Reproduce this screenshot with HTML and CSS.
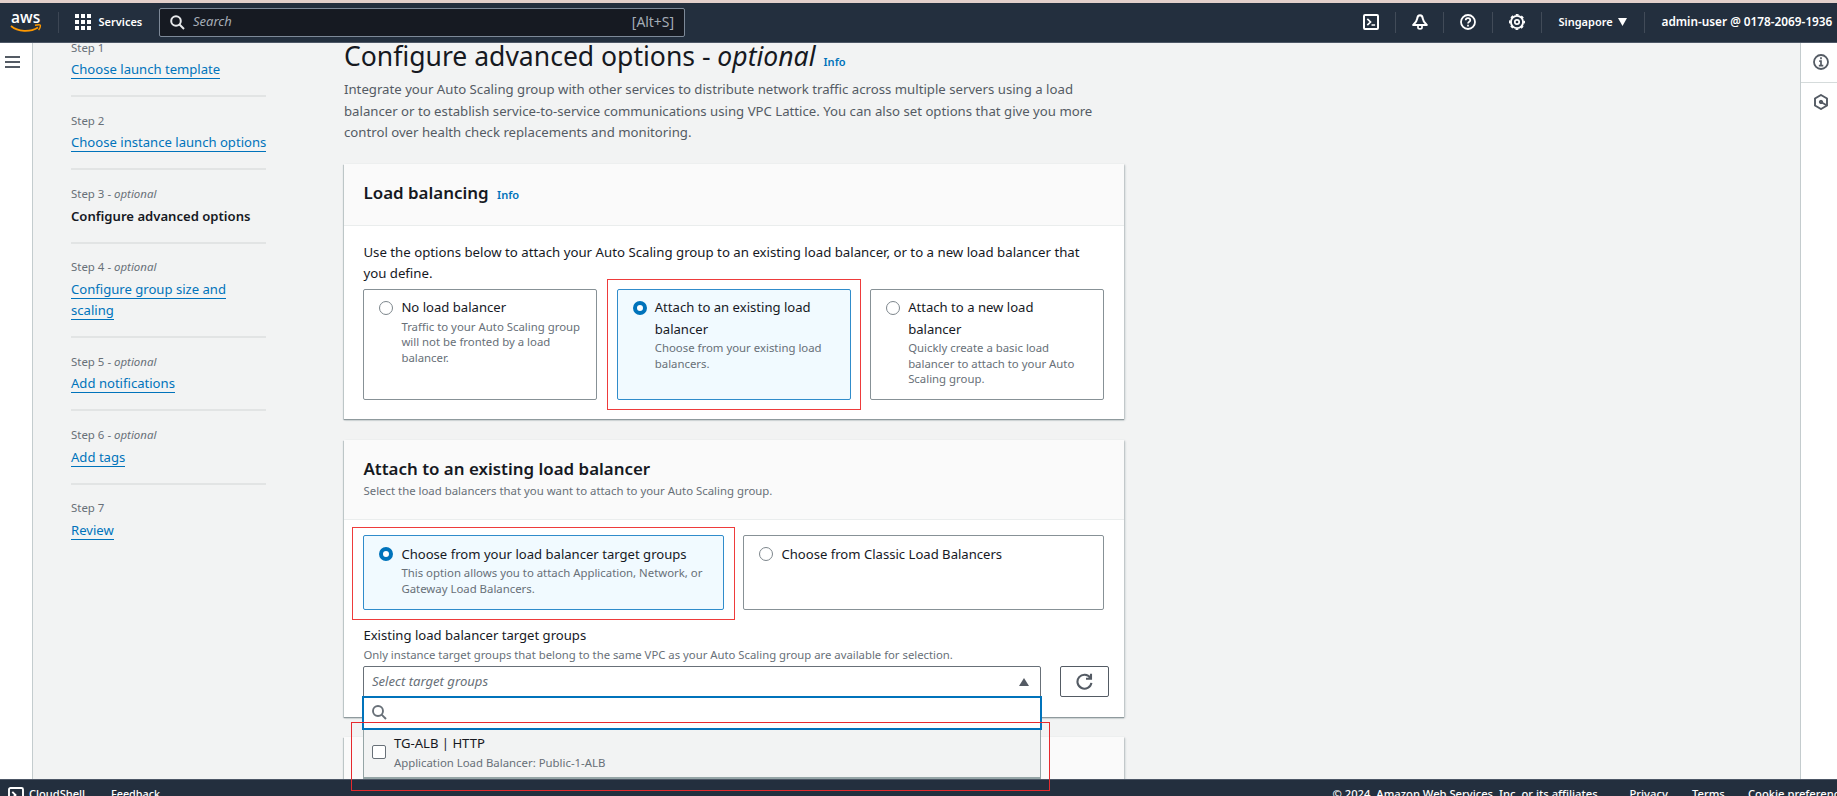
FILE: index.html
```html
<!DOCTYPE html>
<html lang="en">
<head>
<meta charset="utf-8">
<title>Configure advanced options</title>
<link rel="stylesheet" href="styles.css">
</head>
<body>
<div class="app">
  <header class="topbar">
    <div class="brand">
      <span class="brand-name">aws</span>
      <svg class="brand-smile" width="32" height="9" viewBox="0 0 32 9" fill="none" stroke="#ff9900" stroke-width="1.8"><path d="M1 2C8 8 20 8.5 28 3.5"/><path d="M25 1.2C28 .6 30 .8 30.3 1.2C30.6 2.5 29.8 4.6 28.6 6.2" stroke-width="1.4"/></svg>
    </div>
    <div class="services">
      <svg width="16" height="16" viewBox="0 0 16 16" fill="#fff"><path d="M0 0h4v4H0zM6 0h4v4H6zM12 0h4v4h-4zM0 6h4v4H0zM6 6h4v4H6zM12 6h4v4h-4zM0 12h4v4H0zM6 12h4v4H6zM12 12h4v4h-4z"/></svg>
      <span>Services</span>
    </div>
    <div class="search">
      <svg width="15" height="15" viewBox="0 0 15 15" fill="none" stroke="#e8eaec" stroke-width="2"><circle cx="6" cy="6" r="4.8"/><path d="M9.5 9.5L14 14"/></svg>
      <span class="search-hint">Search</span>
      <span class="search-key">[Alt+S]</span>
    </div>
    <nav class="tools">
      <span class="tool"><svg width="16" height="16" viewBox="0 0 16 16" fill="none" stroke="#fff" stroke-width="2"><rect x="1" y="1" width="14" height="14" rx="1"/><path d="M4.3 4.8L7.5 8L4.3 11.2M8.5 11h3.6" stroke-width="1.7"/></svg></span>
      <span class="tool"><svg width="16" height="16" viewBox="0 0 16 16" fill="none" stroke="#fff" stroke-width="2" stroke-linejoin="round"><path d="M8 1.200C6.300 1.200 5.400 2.600 5.200 4.600C4.900 7.300 3.400 9 1.200 11H14.800C12.600 9 11.100 7.300 10.800 4.600C10.600 2.600 9.700 1.200 8 1.200Z"/><path d="M6 11.500v2.200c0 1.500 4 1.500 4 0V11.500" stroke-width="1.700"/></svg></span>
      <span class="tool"><svg width="16" height="16" viewBox="0 0 16 16" fill="none" stroke="#fff" stroke-width="1.8"><circle cx="8" cy="8" r="7"/><path d="M5.700 6.300C5.700 3.400 10.300 3.500 10.300 6.200C10.300 7.800 8 7.700 8 9.600M8 10.800v1.700" stroke-width="1.7"/></svg></span>
      <span class="tool"><svg width="16" height="16" viewBox="0 0 16 16" fill="none" stroke="#fff"><circle cx="8" cy="8" r="6.100" stroke-width="1.900"/><circle cx="8" cy="8" r="7.300" stroke-width="1.400" stroke-dasharray="2.900 2.833" stroke-dashoffset="1.450"/><circle cx="8" cy="8" r="2.200" stroke-width="1.700"/></svg></span>
      <span class="region">Singapore <svg width="9" height="8" viewBox="0 0 9 8" fill="#fff"><path d="M0 0h9L4.500 8z"/></svg></span>
      <span class="account">admin-user @ 0178-2069-1936</span>
    </nav>
  </header>

  <div class="workspace">
    <aside class="rail rail-left">
      <svg width="15" height="12" viewBox="0 0 15 12" stroke="#545b64" stroke-width="1.800"><path d="M0 1h15M0 6h15M0 11h15"/></svg>
    </aside>

    <div class="page">
      <nav class="steps">
        <div class="step"><p class="step-no">Step 1</p><a>Choose launch template</a></div>
        <div class="step"><p class="step-no">Step 2</p><a>Choose instance launch options</a></div>
        <div class="step"><p class="step-no">Step 3 - <i>optional</i></p><b>Configure advanced options</b></div>
        <div class="step"><p class="step-no">Step 4 - <i>optional</i></p><a>Configure group size and<br>scaling</a></div>
        <div class="step"><p class="step-no">Step 5 - <i>optional</i></p><a>Add notifications</a></div>
        <div class="step"><p class="step-no">Step 6 - <i>optional</i></p><a>Add tags</a></div>
        <div class="step"><p class="step-no">Step 7</p><a>Review</a></div>
      </nav>

      <main class="content">
        <h1>Configure advanced options - <i>optional</i><span class="info">Info</span></h1>
        <p class="intro">Integrate your Auto Scaling group with other services to distribute network traffic across multiple servers using a load<br>balancer or to establish service-to-service communications using VPC Lattice. You can also set options that give you more<br>control over health check replacements and monitoring.</p>

        <section class="panel panel-lb">
          <div class="panel-head"><h2>Load balancing<span class="info">Info</span></h2></div>
          <div class="panel-body">
            <p class="text">Use the options below to attach your Auto Scaling group to an existing load balancer, or to a new load balancer that<br>you define.</p>
            <div class="tiles tiles-three">
              <div class="tile"><span class="radio"></span><div><p class="label">No load balancer</p><p class="hint">Traffic to your Auto Scaling group<br>will not be fronted by a load<br>balancer.</p></div></div>
              <div class="tile selected"><span class="radio"></span><div><p class="label">Attach to an existing load<br>balancer</p><p class="hint">Choose from your existing load<br>balancers.</p></div><span class="mark mark-attach"></span></div>
              <div class="tile"><span class="radio"></span><div><p class="label">Attach to a new load<br>balancer</p><p class="hint">Quickly create a basic load<br>balancer to attach to your Auto<br>Scaling group.</p></div></div>
            </div>
          </div>
        </section>

        <section class="panel panel-existing">
          <div class="panel-head"><h2>Attach to an existing load balancer</h2><p class="hint">Select the load balancers that you want to attach to your Auto Scaling group.</p></div>
          <div class="panel-body">
            <div class="tiles tiles-two">
              <div class="tile selected"><span class="radio"></span><div><p class="label">Choose from your load balancer target groups</p><p class="hint">This option allows you to attach Application, Network, or<br>Gateway Load Balancers.</p></div><span class="mark mark-choose"></span></div>
              <div class="tile"><span class="radio"></span><div><p class="label">Choose from Classic Load Balancers</p></div></div>
            </div>
            <div class="field">
              <p class="label">Existing load balancer target groups</p>
              <p class="hint">Only instance target groups that belong to the same VPC as your Auto Scaling group are available for selection.</p>
              <div class="picker">
                <div class="select">
                  <span>Select target groups</span>
                  <svg width="10" height="8" viewBox="0 0 10 8" fill="#545b64"><path d="M0 8h10L5 0z"/></svg>
                  <div class="dropdown">
                    <div class="filter"><svg width="15" height="15" viewBox="0 0 15 15" fill="none" stroke="#687078" stroke-width="1.900"><circle cx="6" cy="6" r="5"/><path d="M9.600 9.600L14 14"/></svg></div>
                    <div class="option"><span class="checkbox"></span><div><p class="label">TG-ALB | HTTP</p><p class="hint">Application Load Balancer: Public-1-ALB</p></div></div>
                    <span class="mark mark-option"></span>
                  </div>
                </div>
                <button class="refresh"><svg width="17" height="17" viewBox="0 0 17 17" fill="none" stroke="#545b64" stroke-width="2.100"><path d="M14.300 4.800A7 7 0 1 0 15.400 9.800"/><path d="M15 .800v5H10"/></svg></button>
              </div>
            </div>
          </div>
        </section>

        <section class="panel panel-next"></section>
      </main>
    </div>

    <aside class="rail rail-right">
      <div class="rail-item"><svg width="16" height="16" viewBox="0 0 16 16" fill="none" stroke="#545b64" stroke-width="1.800"><circle cx="8" cy="8" r="7"/><path d="M8 3.300v1.900M6.200 7.200H8v4.500M5.800 11.700h4.500" stroke-width="1.700"/></svg></div>
      <div class="rail-item"><svg width="16" height="16" viewBox="0 0 16 16" fill="none" stroke="#545b64" stroke-width="1.900"><path d="M8 1l6 3.500v7L8 15l-6-3.500v-7z"/><circle cx="8" cy="8" r="1.700" fill="#545b64" stroke-width="1"/><path d="M8 8l5.500 3.200"/></svg></div>
    </aside>
  </div>

  <footer class="footer">
    <span class="shell"><svg width="16" height="16" viewBox="0 0 16 16" fill="none" stroke="#fff" stroke-width="1.900"><rect x="1" y="1" width="14" height="14" rx="1.500"/><path d="M4.300 4.800L7.500 8L4.300 11.200M8.500 11h3.600"/></svg>CloudShell</span>
    <span class="feedback">Feedback</span>
    <span class="copyright">© 2024, Amazon Web Services, Inc. or its affiliates.</span>
    <span class="privacy">Privacy</span>
    <span class="terms">Terms</span>
    <span>Cookie preferences</span>
  </footer>
</div>
</body>
</html>
```
FILE: styles.css
```css
* { box-sizing: border-box; }
body { margin: 0; overflow: hidden; font: 13.2px/21.4px "Noto Sans", "Open Sans", sans-serif; color: #16191f; }
p, h1, h2 { margin: 0; font-weight: 400; white-space: nowrap; }
svg { display: block; flex: none; }
.app { display: flex; flex-direction: column; width: 1837px; height: 796px; overflow: hidden; }

/* Top bar */
.topbar { display: flex; align-items: center; flex: none; height: 43px; padding-bottom: 1px; border-top: 3px solid #e3d0cb; border-bottom: 1px solid #4d5766; background: #232f3e; color: #fff; white-space: nowrap; }
.brand { width: 59px; height: 21px; padding-left: 10px; border-right: 1px solid #3c4654; }
.brand-name { display: block; height: 13px; margin-top: -1px; padding-left: 1px; font: 600 15.5px/13px "Open Sans", sans-serif; letter-spacing: .1px; }
.services { display: flex; align-items: center; gap: 7.5px; width: 100px; padding-left: 16px; font-weight: 600; font-size: 11px; }
.search { display: flex; align-items: center; width: 526px; height: 29px; padding: 0 10px; border: 1px solid #7d8998; border-radius: 2px; background: #161a22; }
.search-hint { flex: 1; padding-left: 8px; color: #a5adb6; font-style: italic; font-size: 13px; }
.search-key { color: #a5adb6; font-size: 13.9px; }
.tools { display: flex; align-items: center; margin-left: auto; }
.tool { display: flex; align-items: center; justify-content: center; width: 48.8px; height: 21px; border-right: 1px solid #414b58; }
.region { display: flex; align-items: center; gap: 5px; width: 102.5px; height: 21px; padding-left: 16.5px; border-right: 1px solid #414b58; font-weight: 600; font-size: 11px; }
.account { width: 192.5px; padding-left: 17px; font-weight: 600; font-size: 11.8px; }

/* Workspace */
.workspace { display: flex; flex: none; height: 736px; background: #f2f3f3; }
.rail { flex: none; background: #fff; }
.rail-left { width: 33px; padding: 13px 0 0 5px; border-right: 1px solid #c4ccce; }
.rail-right { width: 37px; border-left: 1px solid #c4ccce; }
.rail-item { display: flex; justify-content: center; height: 40px; padding: 11px 0 0 3px; border-bottom: 1px solid #d5dbdb; }
.rail-item + .rail-item { border: 0; }
.page { display: flex; flex: 1; min-width: 0; padding-left: 38px; }

/* Wizard steps */
.steps { flex: none; width: 195px; margin-right: 78px; }
.step { margin-bottom: 13.5px; padding-bottom: 14.7px; border-bottom: 2px solid #e2e4e4; font-size: 13.1px; white-space: nowrap; }
.step:first-child { margin-top: -5.4px; }
.step:last-child { border: 0; }
.step-no { height: 21.6px; color: #687078; font-size: 11.45px; line-height: 20px; }
.step a { color: #0073bb; border-bottom: 1px solid #0073bb; }
.step b { font-weight: 600; }

/* Main column */
.content { flex: none; width: 780px; }
h1 { height: 28px; font-size: 26.54px; line-height: 26px; }
.info { margin-left: 8px; color: #0073bb; font-size: 11.05px; font-weight: 600; }
h2 .info { margin-left: 8.5px; }
.intro { margin: 8.3px 0 20.5px; color: #545b64; font-size: 13.2px; }
.panel { background: #fff; box-shadow: 0 1px 1px #8f9a9d, 1px 1px 2px #bcc4c6, -1px 1px 1px #c9d0d2; }
.panel-head { padding: 16.7px 19.5px 0; border-bottom: 1px solid #eaeded; background: #fafafa; }
.panel-head h2 { font-size: 16.92px; line-height: 23px; font-weight: 600; }
.panel-head .hint { padding-top: 3.5px; }
.panel-lb { height: 255px; margin-bottom: 21px; }
.panel-lb .panel-head { height: 62px; }
.panel-existing { height: 277px; margin-bottom: 20px; }
.panel-existing .panel-head { height: 80px; }
.panel-next { height: 80px; background: #fafafa; }
.panel-body { padding: 0 20px 0 19.4px; }
.text { height: 62.6px; padding-top: 16px; font-size: 13.24px; }
.tiles { display: grid; gap: 19.5px; }
.tiles-three { grid-template-columns: repeat(3, 1fr); height: 111px; }
.tiles-two { grid-template-columns: repeat(2, 1fr); height: 75px; margin-top: 15px; }
.tile { position: relative; display: flex; gap: 8px; padding: 7.5px 15px 0; border: 1px solid #879196; border-radius: 2px; }
.tile.selected { background: #f1faff; border-color: #308ccb; }
.label { font-size: 13.1px; }
.hint { color: #687078; font-size: 11.38px; line-height: 15.7px; }
.radio { flex: none; width: 14px; height: 14px; margin-top: 3.5px; border: 1px solid #7d868c; border-radius: 50%; background: #fff; }
.selected .radio { border: 4px solid #0073bb; }
.mark { position: absolute; border: 1px solid #ee3b3b; pointer-events: none; }
.mark-attach { inset: -11px; }
.mark-choose { inset: -9px -12px -11px -12px; }
.field { padding-top: 15.3px; }
.field > .hint { margin-bottom: 3.7px; font-size: 11.32px; }
.picker { display: flex; align-items: flex-start; gap: 19px; margin-right: -5px; }
.select { position: relative; display: flex; flex: 1; align-items: center; justify-content: space-between; height: 31px; padding: 0 11px 0 7.5px; border: 1px solid #687078; border-radius: 2px 2px 0 0; color: #687078; font-size: 13.1px; font-style: italic; }
.refresh { display: flex; align-items: center; justify-content: center; width: 49px; height: 31px; padding: 0; border: 1px solid #545b64; border-radius: 2px; background: #fff; }

/* Open dropdown, drawn over the panels and the footer */
.dropdown { position: absolute; z-index: 2; top: 28.5px; left: -1px; right: -1px; color: #16191f; font-style: normal; }
.filter { display: flex; align-items: center; height: 34px; margin: 0 -1px; padding-left: 7.5px; border: 2px solid #0073bb; background: #fff; }
.option { display: flex; align-items: center; gap: 8px; height: 49px; padding-left: 7.5px; border: 1px solid #95a5a6; border-width: 0 1px 2px; background: #f2f3f3; }
.option > div { margin-top: -2.5px; }
.checkbox { width: 14px; height: 14px; margin-top: -2px; border: 1px solid #687078; border-radius: 2px; background: #fff; }
.mark-option { top: 26px; left: -12px; right: -9px; height: 69px; border-color: #e62a2e; }

/* Footer */
.footer { display: flex; flex: none; height: 17px; padding: 3px 0 0 8px; overflow: hidden; border-top: 1px solid #4d5766; background: #232f3e; color: #fff; font-size: 11.21px; font-weight: 500; line-height: 22px; white-space: nowrap; }
.footer span { flex: none; }
.shell { display: flex; gap: 5px; width: 103px; font-size: 11.1px; }
.shell svg { margin-top: 4px; }
.feedback { width: 1221.5px; font-size: 10.8px; }
.copyright { width: 297px; }
.privacy { width: 62.5px; }
.terms { width: 56px; }
```
